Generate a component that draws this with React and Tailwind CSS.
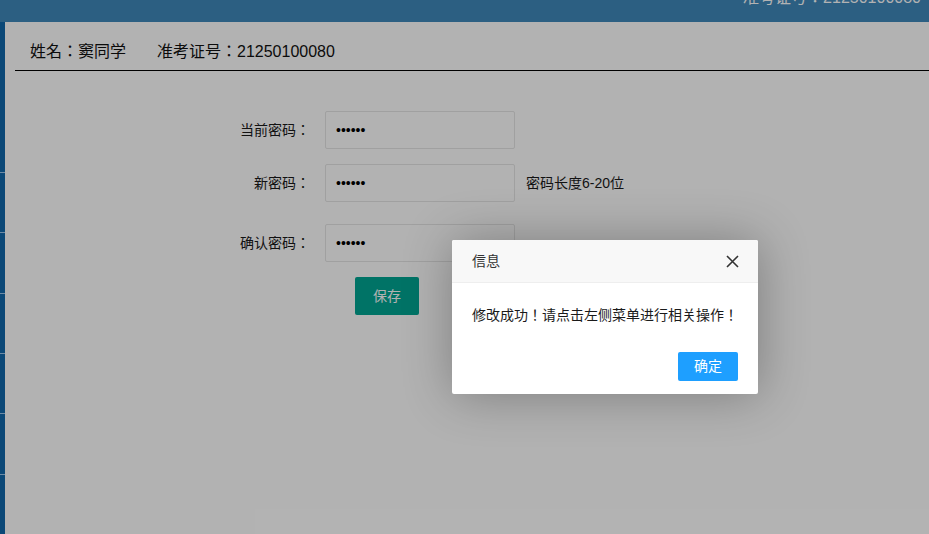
import { useState } from "react";

const font = { fontFamily: '"Liberation Sans", "Noto Sans CJK JP", sans-serif' };

function Field({ label, hint, className }) {
  return (
    <div className={`flex items-center ${className}`}>
      <label className="w-[100px] text-right text-[14px] text-[#1a1a1a]">{label}</label>
      <input
        type="password"
        defaultValue="123456"
        readOnly
        className="ml-[15px] h-[38px] w-[190px] rounded-[2px] border border-[#e6e6e6] bg-white px-[10px] text-[14px] outline-none"
      />
      {hint && <span className="ml-[11px] text-[14px] text-[#1a1a1a]">{hint}</span>}
    </div>
  );
}

export default function App() {
  const [open, setOpen] = useState(true);

  return (
    <div className="relative h-[534px] w-full overflow-hidden bg-white" style={font}>
      {/* top bar */}
      <div className="flex h-[22px] justify-end overflow-hidden bg-[#3f89bb] pr-[8px]">
        <span className="-mt-[10px] text-[16px] leading-[16px] text-white">准考证号：21250100080</span>
      </div>

      <div className="flex h-[512px]">
        {/* side menu strip */}
        <div className="flex w-[5px] flex-col bg-[#1067ab] pt-[150px]">
          {[0, 1, 2, 3, 4, 5].map(i => (
            <div key={i} className="h-[61px] border-t border-[#9cc8ec]" />
          ))}
        </div>

        {/* content */}
        <div className="flex-1 pl-[10px]">
          <div className="flex border-b border-black pb-[7px] pl-[15px] pt-[19px] text-[16px] leading-[22px] text-[#111]">
            <span>姓名：窦同学</span>
            <span className="ml-[31px]">准考证号：21250100080</span>
          </div>

          <div className="ml-[195px]">
            <Field label="当前密码：" className="mt-[40px]" />
            <Field label="新密码：" hint="密码长度6-20位" className="mt-[15px]" />
            <Field label="确认密码：" className="mt-[22px]" />
            <button className="ml-[145px] mt-[15px] h-[38px] w-[64px] rounded-[2px] bg-[#00a593] text-[14px] text-white">
              保存
            </button>
          </div>
        </div>
      </div>

      {open && (
        <>
          <div className="absolute inset-0 bg-black/30" />
          <div className="absolute left-[452px] top-[240px] w-[306px] rounded-[2px] bg-white shadow-[1px_1px_50px_rgba(0,0,0,0.3)]">
            <div className="flex h-[43px] items-center justify-between rounded-t-[2px] border-b border-[#eee] bg-[#f8f8f8] pl-[20px] pr-[18px] text-[14px] text-[#333]">
              <span>信息</span>
              <button onClick={() => setOpen(false)} className="flex h-[16px] w-[16px] items-center justify-center">
                <svg width="13" height="13" viewBox="0 0 13 13">
                  <path d="M1 1L12 12M12 1L1 12" stroke="#333" strokeWidth="1.6" fill="none" />
                </svg>
              </button>
            </div>
            <div className="px-[20px] py-[20px] text-[14px] leading-[24px] text-[#1a1a1a]">
              修改成功！请点击左侧菜单进行相关操作！
            </div>
            <div className="flex justify-end px-[20px] pb-[13px] pt-[5px]">
              <button
                onClick={() => setOpen(false)}
                className="h-[29px] w-[60px] rounded-[2px] bg-[#1e9fff] text-[14px] text-white"
              >
                确定
              </button>
            </div>
          </div>
        </>
      )}
    </div>
  );
}
